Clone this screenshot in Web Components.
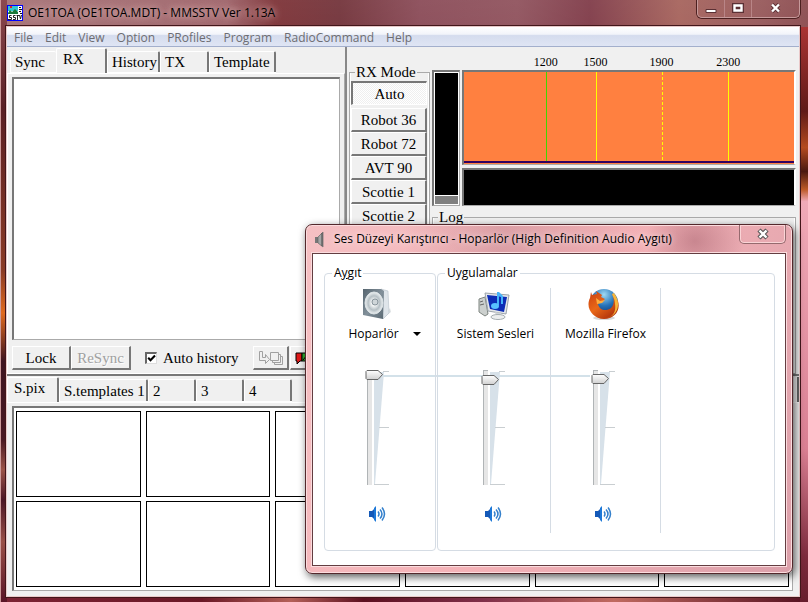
<!DOCTYPE html>
<html lang="tr">
<head>
<meta charset="utf-8">
<title>OE1TOA (OE1TOA.MDT) - MMSSTV Ver 1.13A</title>
<style>
html,body{margin:0;height:100%}
body{overflow:hidden;background:#3a1015;--ui:"Open Sans","Noto Sans",sans-serif;--serif:"Liberation Serif",serif;color:#000}
</style>
</head>
<body>
<sstv-desktop></sstv-desktop>
<script>
const define = (name, css, html, setup) => {
  const tpl = document.createElement('template');
  tpl.innerHTML = `<style>*{box-sizing:border-box}button{font:inherit;color:inherit;margin:0;padding:0;border:0;background:none}${css}</style>${html}`;
  customElements.define(name, class extends HTMLElement {
    constructor() {
      super();
      this.attachShadow({mode: 'open'}).append(tpl.content.cloneNode(true));
    }
    connectedCallback() { if (setup) setup(this, this.shadowRoot); }
  });
};

define('menu-bar', `
:host{display:flex;flex:none;height:20px;align-items:center;padding:2px 0 0 2px;gap:1px;border-bottom:1px solid #a3afcc;
 background:linear-gradient(#fff 0,#f2f4fa 38%,#d5dcee 45%,#dfe5f4 100%);font:12px/18px var(--ui);color:#6d6d72}
`, `<slot></slot>`);

define('menu-item', `:host{display:block}button{padding:0 6px 0 5px;white-space:nowrap}`,
  `<button type="button"><slot></slot></button>`);

define('tab-strip', `
:host{display:flex;flex:none;height:25px;align-items:flex-end;padding-left:3px;font:15px/18px var(--serif)}
`, `<slot></slot>`);

define('tab-page', `
:host{display:block;width:var(--w);height:22px;flex:none;border-bottom:1px solid #fff}
:host([selected]){height:25px;border-bottom:0}
button{width:100%;height:100%;text-align:left;padding-left:4px;white-space:nowrap;border-left:1px solid #fff;border-top:1px solid #fff;
 border-right:2px solid #777;border-radius:2px 2px 0 0}
:host([flat]) button{border-right:0}
:host([selected]) button{padding:0 0 5px 6px}
`, `<button type="button" role="tab"><slot></slot></button>`,
  (h, r) => r.querySelector('button').setAttribute('aria-selected', h.hasAttribute('selected')));

define('push-button', `
:host{display:block;flex:none;height:24px;width:var(--w,100%);font:15px/18px var(--serif)}
button{display:flex;align-items:center;justify-content:center;width:100%;height:100%;white-space:nowrap;background:#f0f0f0;
 border:1px solid #fff;border-right:2px solid #777;border-bottom:2px solid #777}
:host([pressed]) button{border:2px solid #777;border-right:1px solid #fff;border-bottom:1px solid #fff;
 background:repeating-conic-gradient(#fff 0 25%,#efefef 0 50%) 0 0/2px 2px}
button:disabled{color:#a0a0a0;text-shadow:1px 1px #fff}
`, `<button type="button"><slot></slot></button>`,
  (h, r) => { r.querySelector('button').disabled = h.hasAttribute('disabled'); });

define('sunken-box', `
:host{display:block;border:2px solid #777;border-right:1px solid #aaa;border-bottom:1px solid #aaa;background:#fff}
`, `<slot></slot>`);

define('check-option', `
:host{display:block;font:15px/18px var(--serif)}
label{display:flex;align-items:center;gap:6px;white-space:nowrap}
input{appearance:none;margin:0;width:12px;height:12px;border:2px solid #666;border-right:1px solid #ddd;border-bottom:1px solid #ddd;
 background:#fff url("data:image/svg+xml,%3Csvg xmlns='http://www.w3.org/2000/svg' viewBox='0 0 9 9'%3E%3Cpath d='M1.2 3.8 3.5 6.2 8 1.6' fill='none' stroke='%23000' stroke-width='2.1'/%3E%3C/svg%3E") center/9px 9px no-repeat}
`, `<label><input type="checkbox" checked><slot></slot></label>`);

define('group-frame', `
:host{display:block}
fieldset{margin:0;padding:0;min-width:0;height:100%;border:1px solid #aaa;box-shadow:inset 1px 0 #fff,inset -1px 0 #fff}
legend{margin-left:5px;padding:0 1px;font:15px/18px var(--serif);height:18px}
`, `<fieldset><legend></legend><slot></slot></fieldset>`,
  (h, r) => { r.querySelector('legend').textContent = h.getAttribute('legend'); });

define('receive-pane', `
:host{display:flex;flex-direction:column;flex:none;width:340px;border-right:2px solid #888;padding-top:1px}
.page{flex:1;display:flex;flex-direction:column;border:1px solid #fff;border-right:1px solid #aaa;padding:3px 4px 3px}
sunken-box{flex:1}
.tools{display:flex;align-items:center;padding-top:6px}
.tools{overflow:hidden}
check-option{margin:0 15px 0 14px}
`, `
<tab-strip role="tablist">
 <tab-page flat style="--w:46px">Sync</tab-page><tab-page selected style="--w:51px">RX</tab-page><tab-page style="--w:53px">History</tab-page><tab-page style="--w:49px">TX</tab-page><tab-page style="--w:67px">Template</tab-page>
</tab-strip>
<div class="page">
 <sunken-box></sunken-box>
 <div class="tools">
  <push-button style="--w:59px">Lock</push-button>
  <push-button style="--w:60px" disabled>ReSync</push-button>
  <check-option>Auto history</check-option>
  <push-button style="--w:36px" disabled><svg width="26" height="16" viewBox="0 0 26 16" fill="none" stroke="#a0a0a0"><path d="M1.5 1.5h3v6h3v-3l4 5-4 4v-3h-6z"/><path d="M12.500 2.500h8v8h-8z"/><path d="M20.500 4.500h2v8h-8v-2M22.500 6.500h2v8h-8v-2"/></svg></push-button>
  <push-button style="--w:46px;margin-left:1px"><svg width="36" height="14" viewBox="0 0 36 14"><path d="M1 2h6v8H5l-3 3v-3H1z" fill="#e01818" stroke="#000"/><path d="M7 2h10v8H7z" fill="#30b030" stroke="#000"/><path d="m8 9 5-6" stroke="#000"/></svg></push-button>
 </div>
</div>`);

define('mode-list', `
:host{display:block;flex:none;width:81px;padding-top:16px}
group-frame{height:100%}
.list{display:flex;flex-direction:column;padding:0 2px 0 1px}
push-button[pressed]{margin-bottom:3px}
`, `<group-frame legend="RX Mode"><div class="list">
<push-button pressed>Auto</push-button><push-button>Robot 36</push-button><push-button>Robot 72</push-button><push-button>AVT 90</push-button><push-button>Scottie 1</push-button><push-button>Scottie 2</push-button>
</div></group-frame>`);

define('signal-monitor', `
:host{display:grid;flex:1;min-width:0;grid-template-columns:28px 1fr;grid-template-rows:23px 95px 41px 1fr;column-gap:2px;row-gap:0;padding-right:3px}
.scale{grid-column:2;display:grid;grid-template-columns:58fr 50fr 50fr 82fr 52fr 39fr;padding:6px 3px 0 1px;font:12px/18px var(--serif);text-align:center}
.scale :first-child{grid-column:2}
.level{grid-column:1;grid-row:2/4;display:flex;flex-direction:column;padding:1px}
.level i{flex:1;background:#000}
.level b{height:9px;border-top:1px solid #fff;background:#808080}
.scope{background:#ff8040;border-right:2px solid #fff}
svg{display:block;width:100%;height:100%}
.fall{margin-top:3px;background:#000;border-right:2px solid #fff}
group-frame{grid-column:1/3;padding-top:2px}
`, `
<div class="scale"><span>1200</span><span>1500</span><span>1900</span><span>2300</span></div>
<sunken-box class="level"><i></i><b></b></sunken-box>
<sunken-box class="scope"><svg shape-rendering="crispEdges"><defs><pattern id="dash" width="400" height="5" patternUnits="userSpaceOnUse"><path fill="#ff0" d="M0 0h400v3H0z"/></pattern></defs><g fill="#ff0"><rect x="82" width="1" height="90" fill="#40d800"/><rect x="40%" width="1" height="90"/><rect x="60%" width="1" height="90" fill="url(#dash)"/><rect x="80%" width="1" height="90"/></g><rect width="100%" y="89" height="2" fill="#300060"/></svg></sunken-box>
<sunken-box class="fall"></sunken-box>
<group-frame legend="Log"></group-frame>`);

define('picture-stock', `
:host{display:block;flex:none;border-top:2px solid #777;padding:1px 0 5px}
.bar{display:flex;justify-content:space-between}
.more{width:5px;height:25px;border-left:1px solid #fff;border-right:2px solid #666}
tab-strip{padding-left:0}
tab-page{height:23px}
tab-page[selected]{height:25px}
.grid{display:grid;grid-template-columns:repeat(6,1fr);grid-auto-rows:86px;gap:4px 5px;padding:3px 3px 3px 2px}
.grid button{border:1px solid #000;background:#fff}
.wrap{border-top:1px solid #fff;padding:3px 6px 0 5px}
`, `
<div class="bar"><tab-strip role="tablist">
<tab-page selected style="--w:52px">S.pix</tab-page><tab-page style="--w:89px">S.templates 1</tab-page><tab-page style="--w:48px">2</tab-page><tab-page style="--w:48px">3</tab-page><tab-page style="--w:48px">4</tab-page>
</tab-strip><button class="more" aria-label="Next tabs"></button></div>
<div class="wrap"><sunken-box><div class="grid">${'<button type="button" aria-label="Picture slot"></button>'.repeat(12)}</div></sunken-box></div>`);

define('app-window', `
:host{display:flex;flex-direction:column;height:100%;padding:0 8px 5px 6px;position:relative;
 background:
 linear-gradient(90deg,#c99 0 1px,transparent 1px) 0 0/6px 100% no-repeat,
 linear-gradient(#8c4a50 0,#5b2025 18%,#8a3b26 45%,#e06a20 52%,#3f1420 60%,#4a1822 73%,#9b5348 78%,#4c1625 83%,#995048 90%,#5a1426 100%) 0 0/7px 100% no-repeat,
 linear-gradient(#a33 0,#5f1a18 14%,#b44a20 20%,#4a1810 24%,#bd5a28 27%,#f0aab8 29%,#d97f92 70%,#7c2a3c 88%,#5a1624 100%) 100% 27px/8px 100% no-repeat,
 linear-gradient(90deg,#7c2434,#6a1826 25%,#b46058 36%,#5c1020 45%,#80304a 60%,#c06a60 76%,#541020) 0 100%/100% 7px no-repeat,
 linear-gradient(rgba(255,255,255,.16),transparent 40%),
 linear-gradient(90deg,#9a6165 0,#925057 28%,#6d191e 34%,#611a22 42%,#7c3543 52%,#823d49 64%,#702332 73%,#9b5048 84%,#8a4446 94%,#7c3539 100%)}
header{display:flex;flex:none;align-items:flex-start;height:26px;padding-left:1px}
.logo{margin:5px 5px 0 0;flex:none}
h1{margin:3px 0 0;padding:0 8px 0 0;font:12px/20px var(--ui);white-space:nowrap;flex:1;text-shadow:0 0 6px #e0b8b8,0 0 10px #d0a0a0}
.caption{display:flex;height:18px;flex:none;width:103px;border:1px solid #c69a9b;border-top:0;border-radius:0 0 5px 5px;box-shadow:0 0 0 1px #4c2020}
.caption button{flex:1;display:grid;place-items:start center;padding-top:3px;border-right:1px solid #b98587}
.caption button:last-child{flex:none;width:47px;border:0}
.client{flex:1;min-height:0;display:flex;flex-direction:column;background:#f0f0f0;border:1px solid #eac9c9;border-top-color:#e6c7c7;box-shadow:0 0 0 1px #42161a}
.upper{flex:1;min-height:0;display:flex;gap:2px}
`, `
<header>
<svg class="logo" width="16" height="16" viewBox="0 0 16 16"><path fill="#00f" d="M0 0h16v16H0z"/><path fill="#fff" d="M1 1h14v14H1z"/><path fill="#30c8d0" d="M1 1h10v5H1z"/><path fill="#187838" d="m1 8 2-3 2 2 3-3 3 3v2H1z"/><path fill="#e02020" d="M3 1h2v2H3z"/><path stroke="#111" d="M12 2.500h2M12 4.500h3M12 6.500h2M13 8.500h2"/><path d="M4.500 10.500h-2v2h2v2H1M8.500 10.500h-2v2h2v2H6M9.500 10.500h3M10.500 10v5M12.500 10l1 4 1-4" fill="none" stroke="#222"/></svg>
<h1>OE1TOA (OE1TOA.MDT) - MMSSTV Ver 1.13A</h1>
<div class="caption">
<button aria-label="Minimize"><svg width="12" height="11"><path d="M1 6.500h10v3H1z" fill="#fff" stroke="#5b3034"/></svg></button>
<button aria-label="Maximize"><svg width="12" height="11"><path d="M2.500 2.500h7v5h-7z" fill="none" stroke="#5b3034" stroke-width="5"/><path d="M2.500 2.500h7v5h-7z" fill="none" stroke="#fff" stroke-width="2.400"/></svg></button>
<button aria-label="Close"><svg width="13" height="11"><path d="m3 1.500 7 7m0-7-7 7" stroke="#5b3034" stroke-width="4"/><path d="m3 1.500 7 7m0-7-7 7" stroke="#fff" stroke-width="2.400"/></svg></button>
</div>
</header>
<div class="client">
<menu-bar><menu-item>File</menu-item><menu-item>Edit</menu-item><menu-item>View</menu-item><menu-item>Option</menu-item><menu-item>PRofiles</menu-item><menu-item>Program</menu-item><menu-item>RadioCommand</menu-item><menu-item>Help</menu-item></menu-bar>
<div class="upper"><receive-pane></receive-pane><mode-list></mode-list><signal-monitor></signal-monitor></div>
<picture-stock></picture-stock>
</div>`);

define('mixer-channel', `
:host{display:flex;flex:none;flex-direction:column;width:110px;height:245px;font:12px/18px var(--ui)}
.icon{height:32px;padding-left:37px}
.name{display:flex;justify-content:center;align-items:center;height:27px;white-space:nowrap}
.volume{position:relative;width:26px;height:118px;margin:22px 0 0 40px}
.volume svg{display:block}
input{position:absolute;inset:0 auto 0 0;width:19px;height:118px;margin:0;appearance:none;background:none;writing-mode:vertical-lr;direction:rtl}
input::-webkit-slider-thumb{appearance:none;width:19px;height:12px;
 background:url("data:image/svg+xml,%3Csvg xmlns='http://www.w3.org/2000/svg' width='19' height='12'%3E%3Cdefs%3E%3ClinearGradient id='a' x2='0' y2='1'%3E%3Cstop stop-color='%23fff'/%3E%3Cstop offset='1' stop-color='%23d0d0d0'/%3E%3C/linearGradient%3E%3C/defs%3E%3Cpath d='M2 1.500h11l4.500 4-4.500 5H2l-1-1v-7z' fill='url(%23a)' stroke='%23666'/%3E%3C/svg%3E")}
.mute{display:block;width:18px;height:18px;margin:18px 0 0 43px}
`, `
<div class="icon"><slot name="icon"></slot></div>
<div class="name"><slot></slot></div>
<div class="volume">
<svg width="26" height="118" shape-rendering="crispEdges"><path d="M3 1h4v115H3z" fill="#e6e6e6"/><path d="M2.500 1v115M2.500 1.500h4" stroke="#b0b4b6" fill="none"/><path d="M9 3h10L10 115H9z" fill="#d7e1e9" shape-rendering="auto"/><path d="M18 2.500h6M14 58.500h10M9 115.500h15" stroke="#c9ced1"/></svg>
<input type="range" min="0" max="100">
</div>
<button class="mute" aria-label="Mute"><svg width="18" height="18" viewBox="0 0 18 18"><path d="M1 6h3l4-4v14l-4-4H1z" fill="#1459b8"/><path d="M6 3v12l2 2V1z" fill="#1c78d8"/><path d="M10 6.500q2 2.500 0 5M12 4.500q4 4.500 0 9M14 2.500q5 6.500 0 13" fill="none" stroke="#3480cc" stroke-width="1.500"/></svg></button>`,
  (h, r) => {
    const i = r.querySelector('input');
    i.value = h.getAttribute('value');
    i.setAttribute('aria-label', h.getAttribute('label'));
  });

define('mixer-window', `
:host{display:flex;flex-direction:column;padding:0 6px 7px;border:1px solid #53282c;border-radius:7px;
 box-shadow:inset 0 0 0 1px #fbdcde,2px 3px 8px rgba(0,0,0,.65);
 background:radial-gradient(ellipse at 80% 16px,rgba(130,60,75,.35) 0,transparent 9%),linear-gradient(90deg,transparent 0 20%,rgba(120,60,75,.2) 40%,transparent 70%) 0 0/100% 28px no-repeat,linear-gradient(115deg,#f5c0c3,#f4b2b7 50%,#dba0aa);
 font:12px/18px var(--ui)}
header{display:flex;align-items:flex-start;height:28px;flex:none}
header>svg{margin:6px 6px 0 2px}
h2{flex:1;margin:0;padding-top:5px;font:12px/18px var(--ui);white-space:nowrap;text-shadow:0 0 6px #fff}
.close{width:47px;height:19px;border:1px solid #956a6e;border-top:0;border-radius:0 0 5px 5px;display:grid;place-items:center;box-shadow:inset 0 0 0 1px #fad4d6}
.body{position:relative;isolation:isolate;flex:1;display:flex;gap:1px;padding:10px 10px 14px 11px;background:#fff;border:1px solid #633d41;box-shadow:0 0 0 1px #fbdcde}
fieldset{margin:0;padding:6px 0 0;min-width:0;border:1px solid #d5dce4;border-radius:4px;display:block}
fieldset.device{width:112px;flex:none}
fieldset.apps{flex:1}
legend{margin-left:7px;padding:0 2px;height:18px}
.row{display:flex;padding-left:3px}
.row mixer-channel{border-right:1px solid #d5dce4}
.link{position:absolute;z-index:-1;left:69px;top:121px;width:208px;height:2px;background:#d3e1e9}
.choose{display:flex;align-items:center;gap:14px;padding-left:9px}
svg{display:block}
`, `
<header>
<svg width="14" height="17" viewBox="0 0 14 17"><path d="M1 6h3v6H1z" fill="#777"/><path d="m4 6 5-5v15l-5-4z" fill="#a6a6a6" stroke="#666" stroke-width=".7"/><path d="M8 2v13" stroke="#444"/></svg>
<h2>Ses Düzeyi Karıştırıcı - Hoparlör (High Definition Audio Aygıtı)</h2>
<button class="close" aria-label="Kapat"><svg width="14" height="12"><path d="m3 2 8 8m0-8-8 8" stroke="#555" stroke-width="4.500"/><path d="m3.500 2.500 7 7m0-7-7 7" stroke="#fff" stroke-width="2.400"/></svg></button>
</header>
<div class="body">
<div class="link"></div>
<fieldset class="device"><legend>A<u>y</u>gıt</legend>
<mixer-channel value="100" label="Hoparlör">
<svg slot="icon" width="32" height="32" viewBox="0 0 32 32"><defs><linearGradient id="b" x2="1" y2="1"><stop stop-color="#56656f"/><stop offset=".5" stop-color="#82909a"/><stop offset="1" stop-color="#5a6973"/></linearGradient><radialGradient id="c"><stop stop-color="#8d999f"/><stop offset=".25" stop-color="#f5f7f7"/><stop offset=".65" stop-color="#b6c0c5"/><stop offset="1" stop-color="#eef2f3"/></radialGradient></defs><path d="m20 31 9-7-1-4z" fill="#dde1e3"/><path d="m19 1 7 2 1 22-6 6z" fill="#dfe5ea" stroke="#b5c0c8" stroke-width=".6"/><path d="M1 1h18l3 2-1 28L1 27z" fill="url(#b)"/><ellipse cx="12" cy="15" rx="9" ry="11" fill="url(#c)" stroke="#dbe2e5"/><circle cx="13" cy="14" r="3" fill="#cfd6d9" stroke="#89959c"/></svg>
<button class="choose">Hoparlör<svg width="8" height="4"><path d="M0 0h8L4 4z"/></svg></button>
</mixer-channel></fieldset>
<fieldset class="apps"><legend>Uygulamalar</legend>
<div class="row">
<mixer-channel value="95" label="Sistem Sesleri">
<svg slot="icon" width="32" height="32" viewBox="0 0 32 32"><path d="m1 11 6-2 3 17-3 2-6-4z" fill="#ccd0ce" stroke="#7e8580"/><path d="m2 14 3-1m-3 4 4-1" stroke="#666"/><path d="m7 5 24 2-3 19L10 23z" fill="#e4e7ea" stroke="#9ba3aa"/><path d="m9 7 20 2-3 15-14-3z" fill="#0c2cb6"/><path d="m17 24 6 1v4h-5z" fill="#cfd3d5"/><ellipse cx="20" cy="29" rx="7" ry="2.500" fill="#eceeee" stroke="#a5adb0"/><path d="M19 17V4h2l4 4v8h-2V9l-2-1v9z" fill="#45b3fa"/><ellipse cx="17" cy="18" rx="4" ry="3" fill="#57c0ff"/></svg>Sistem Sesleri</mixer-channel>
<mixer-channel value="96" label="Mozilla Firefox">
<svg slot="icon" width="32" height="32" viewBox="0 0 32 32"><defs><radialGradient id="d" cx=".5" cy=".2" r=".8"><stop stop-color="#9ed9f4"/><stop offset=".5" stop-color="#2572b8"/><stop offset="1" stop-color="#092b68"/></radialGradient><linearGradient id="e" x2=".8" y2="1"><stop stop-color="#c93e10"/><stop offset=".5" stop-color="#e96818"/><stop offset="1" stop-color="#a92b0a"/></linearGradient></defs><ellipse cx="16" cy="30" rx="11" ry="2" fill="#d8d8d8"/><circle cx="16" cy="15" r="14" fill="url(#d)"/><path d="M3 4 4 7l5-1-1-3 6 4-1 2 4 2-3 3-4 2c1 6 8 8 13 4 4-4 3-10 1-14l6 7c3 10-4 18-14 18C5 31-3 20 2 10z" fill="url(#e)"/><path d="M26 5c7 9 5 22-7 25 7-2 9-7 8-14 0-5-2-7-3-10z" fill="#f7b63b"/><path d="m9 16 5-1 3-3-5 1-4-3z" fill="#ffad3b"/></svg>Mozilla Firefox</mixer-channel>
</div></fieldset>
</div>`);

define('sstv-desktop', `
:host{display:block;height:100%;position:relative}
mixer-window{position:absolute;left:305px;top:224px;width:488px;height:350px}
`, `<app-window></app-window><mixer-window></mixer-window>`);
</script>
</body>
</html>
